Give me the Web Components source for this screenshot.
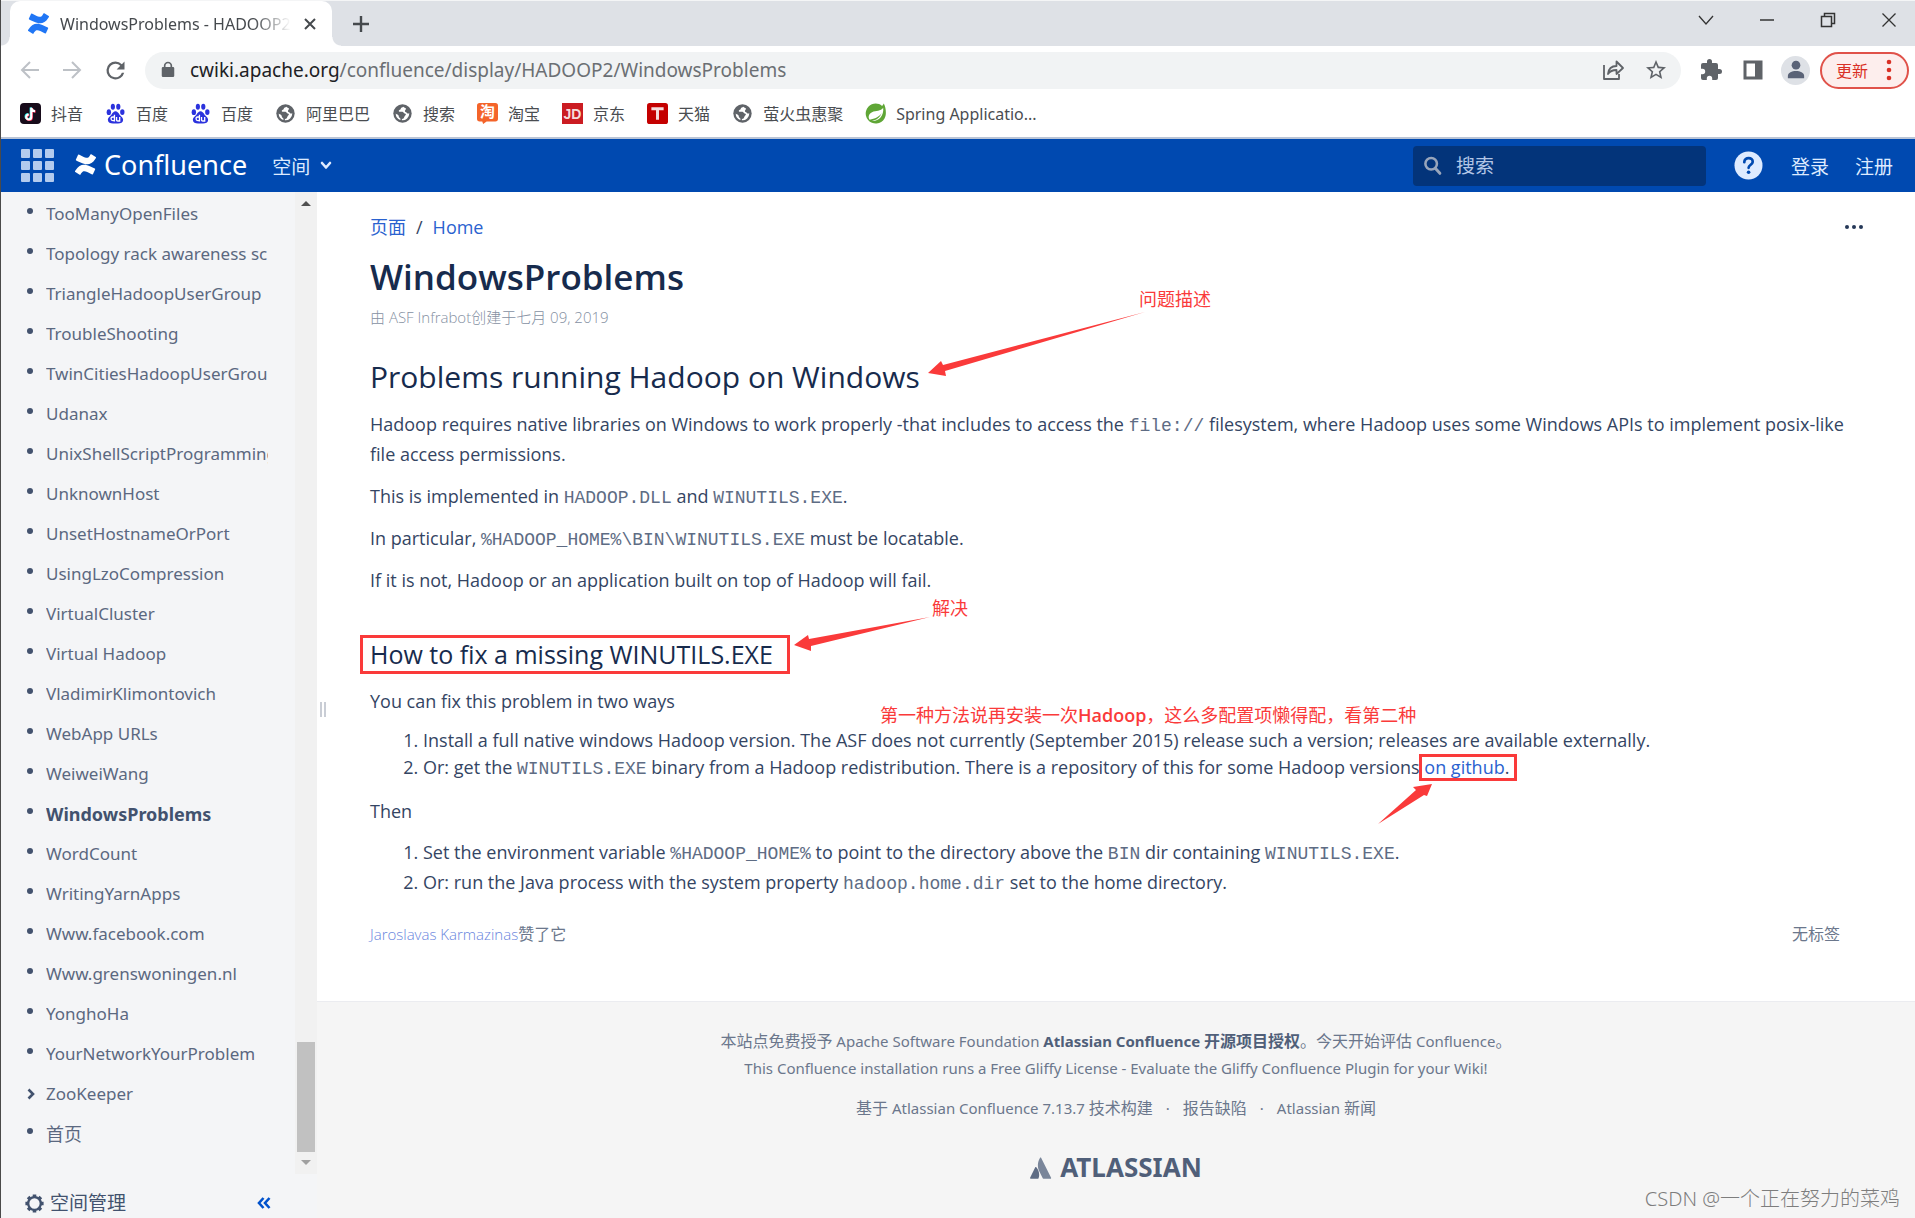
<!DOCTYPE html>
<html lang="zh-CN">
<head>
<meta charset="utf-8">
<title>WindowsProblems - HADOOP2</title>
<style>
  html, body { margin: 0; height: 100%; }
  body {
    font-family: "Noto Sans", "Noto Sans CJK SC", sans-serif;
    font-size: 17px;
    color: #172b4d;
    background: #fff;
    overflow: hidden;
  }
</style>
</head>
<body>
<wiki-window></wiki-window>

<template id="t-window">
  <style>
    :host { display: flex; flex-direction: column; height: 100vh; box-sizing: border-box; border-left: 1px solid #4a4a4a; position: relative; }
    .body { flex: 1; min-height: 0; display: flex; }
    main { flex: 1; min-width: 0; display: flex; flex-direction: column; position: relative; }
    .handle { position: absolute; left: 3px; top: 510px; width: 2px; height: 15px; border: solid #c9cdd5; border-width: 0 2px; }
    .watermark { position: absolute; right: 15px; bottom: 6px; font-size: 20px; font-weight: 300; line-height: 26px; color: #7d7d7d; }
  </style>
  <tab-strip></tab-strip>
  <nav-toolbar></nav-toolbar>
  <bookmark-bar></bookmark-bar>
  <wiki-header></wiki-header>
  <div class="body">
    <page-tree></page-tree>
    <main>
      <wiki-article></wiki-article>
      <wiki-footer></wiki-footer>
      <div class="handle"></div>
    </main>
  </div>
  <div class="watermark">CSDN @一个正在努力的菜鸡</div>
</template>

<template id="t-tabs">
  <style>
    :host { display: flex; height: 45px; background: #dee1e6; border-top: 1px solid #f4f5f6; padding-left: 9px; color: #45494d; }
    .tab { width: 322px; box-sizing: border-box; background: #fff; border-radius: 10px 10px 0 0; display: flex; align-items: center; padding: 0 14px 0 18px; gap: 11px; position: relative; }
    .tab::before, .tab::after { content: ""; position: absolute; bottom: 0; width: 9px; height: 9px; }
    .tab::before { left: -9px; background: radial-gradient(circle at 0 0, transparent 8px, #fff 9px); }
    .tab::after { right: -9px; background: radial-gradient(circle at 100% 0, transparent 8px, #fff 9px); }
    .title { flex: 1; overflow: hidden; white-space: nowrap; font-size: 16px; -webkit-mask-image: linear-gradient(90deg, #000 84%, transparent); mask-image: linear-gradient(90deg, #000 84%, transparent); }
    button { border: 0; background: none; padding: 0; display: flex; color: inherit; }
    .new { margin-left: 20px; align-items: center; }
    .win { margin-left: auto; display: flex; gap: 43px; padding: 10px 17px 0 0; align-items: flex-start; color: #333; }
    svg { display: block; }
  </style>
  <div class="tab">
    <ui-icon name="confluence" size="21" style="color:#2076f5"></ui-icon>
    <span class="title">WindowsProblems - HADOOP2</span>
    <button aria-label="关闭标签页"><svg width="16" height="16" viewBox="0 0 16 16" stroke="currentColor" stroke-width="2"><path d="M3 3l10 10M13 3L3 13"/></svg></button>
  </div>
  <button class="new" aria-label="新标签页"><svg width="18" height="18" viewBox="0 0 18 18" stroke="currentColor" stroke-width="2.4"><path d="M9 1v16M1 9h16"/></svg></button>
  <div class="win">
    <button aria-label="搜索标签页"><svg width="18" height="18" viewBox="0 0 18 18" fill="none" stroke="currentColor" stroke-width="1.3"><path d="M2 5l7 8 7-8"/></svg></button>
    <button aria-label="最小化"><svg width="18" height="18" viewBox="0 0 18 18" stroke="currentColor" stroke-width="1.5"><path d="M2 9h14"/></svg></button>
    <button aria-label="还原"><svg width="18" height="18" viewBox="0 0 18 18" fill="none" stroke="currentColor" stroke-width="1.5"><path d="M2.5 5.5h10v10h-10zM5.5 5V2.500h10v10H13"/></svg></button>
    <button aria-label="关闭"><svg width="18" height="18" viewBox="0 0 18 18" stroke="currentColor" stroke-width="1.3"><path d="M2.500 2.500l13 13M15.500 2.500l-13 13"/></svg></button>
  </div>
</template>

<template id="t-toolbar">
  <style>
    :host { display: flex; height: 48px; align-items: center; padding: 0 6px 0 17px; box-sizing: border-box; color: #5f6368; }
    button { border: 0; background: none; padding: 0; display: flex; color: inherit; font: inherit; align-items: center; }
    .nav { display: flex; gap: 18px; padding-right: 16px; }
    .off { color: #bdc1c6; }
    .omni { flex: 1; height: 37px; border-radius: 19px; background: #f1f3f4; display: flex; align-items: center; padding: 0 13px 0 13px; gap: 12px; }
    .url { flex: 1; font-size: 19px; line-height: 37px; color: #6b6f73; white-space: nowrap; }
    .url b { font-weight: 400; color: #202124; }
    .acts { display: flex; gap: 19px; }
    .ext { display: flex; gap: 18px; align-items: center; padding: 0 10px 0 18px; }
    .avatar { width: 29px; height: 29px; border-radius: 50%; background: #dee1e6; color: #5a6377; justify-content: center; overflow: hidden; margin-left: -2px; }
    .update { box-sizing: border-box; width: 89px; height: 37px; border: 2px solid #e0524a; border-radius: 19px; background: #fdeeed; color: #d93025; font-size: 16px; padding: 0 12px 0 14px; justify-content: space-between; }
  </style>
  <div class="nav">
    <button class="off" aria-label="后退"><ui-icon name="back" size="24"></ui-icon></button>
    <button class="off" aria-label="前进"><ui-icon name="forward" size="24"></ui-icon></button>
    <button aria-label="刷新"><ui-icon name="reload" size="27"></ui-icon></button>
  </div>
  <div class="omni">
    <ui-icon name="lock" size="20"></ui-icon>
    <span class="url"><b>cwiki.apache.org</b>/confluence/display/HADOOP2/WindowsProblems</span>
    <div class="acts">
      <button aria-label="分享"><ui-icon name="share" size="24"></ui-icon></button>
      <button aria-label="收藏"><ui-icon name="star" size="24"></ui-icon></button>
    </div>
  </div>
  <div class="ext">
    <button aria-label="扩展程序"><ui-icon name="puzzle" size="24"></ui-icon></button>
    <button aria-label="侧边栏"><ui-icon name="panel" size="24"></ui-icon></button>
    <button class="avatar" aria-label="个人资料"><ui-icon name="person" size="26"></ui-icon></button>
  </div>
  <button class="update">更新<ui-icon name="dots" size="12" tall="24"></ui-icon></button>
</template>

<template id="t-bookmarks">
  <style>
    :host { display: flex; height: 45px; box-sizing: border-box; border-bottom: 2px solid #b9c4d6; align-items: center; gap: 22px; padding: 0 0 4px 19px; }
  </style>
  <bookmark-link icon="douyin">抖音</bookmark-link>
  <bookmark-link icon="baidu">百度</bookmark-link>
  <bookmark-link icon="baidu">百度</bookmark-link>
  <bookmark-link icon="globe">阿里巴巴</bookmark-link>
  <bookmark-link icon="globe">搜索</bookmark-link>
  <bookmark-link icon="taobao">淘宝</bookmark-link>
  <bookmark-link icon="jd">京东</bookmark-link>
  <bookmark-link icon="tmall">天猫</bookmark-link>
  <bookmark-link icon="globe">萤火虫惠聚</bookmark-link>
  <bookmark-link icon="spring">Spring Applicatio...</bookmark-link>
</template>

<template id="t-header">
  <style>
    :host { display: flex; height: 53px; background: #0049b0; align-items: center; color: #deebff; font-size: 19px; padding: 0 22px 0 20px; }
    button { border: 0; background: none; padding: 0; display: flex; color: inherit; font: inherit; align-items: center; }
    a { color: inherit; text-decoration: none; }
    .apps { display: grid; grid-template-columns: repeat(3, 9px); gap: 3px; }
    .apps i { height: 9px; background: #b3cbee; border-radius: 1px; }
    .logo { display: flex; align-items: center; gap: 8px; margin-left: 21px; padding-bottom: 2px; color: #fff; font-size: 27px; line-height: 40px; }
    .spaces { margin-left: 25px; gap: 8px; }
    .search { margin-left: auto; width: 293px; height: 40px; box-sizing: border-box; border-radius: 4px; background: #03347a; display: flex; align-items: center; padding-left: 9px; gap: 12px; color: #98a5bb; }
    input { flex: 1; min-width: 0; border: 0; background: none; font: inherit; color: #b3c6e6; padding: 0; outline: 0; }
    input::placeholder { color: #b3c6e6; opacity: 1; }
    .help { margin: 0 28px; }
    .join { margin-left: 26px; }
  </style>
  <button class="apps" aria-label="应用"><i></i><i></i><i></i><i></i><i></i><i></i><i></i><i></i><i></i></button>
  <a class="logo" href="#"><ui-icon name="confluence" size="21"></ui-icon>Confluence</a>
  <button class="spaces">空间<svg width="16" height="12" viewBox="0 0 16 12" fill="none" stroke="currentColor" stroke-width="2.600" stroke-linecap="round" stroke-linejoin="round"><path d="M4 3l4 4.500L12 3"/></svg></button>
  <label class="search"><ui-icon name="search" size="22"></ui-icon><input type="text" placeholder="搜索" aria-label="搜索"></label>
  <a class="help" href="#" aria-label="帮助"><svg width="29" height="29" viewBox="0 0 29 29" style="display:block"><circle cx="14.500" cy="14.500" r="14" fill="#deebff"/><path d="M10.300 11.200c0-5.600 8.800-5.400 8.400-.2-.2 2.700-4 2.900-4.100 5.800" fill="none" stroke="#0049b0" stroke-width="2.700" stroke-linecap="round"/><circle cx="14.600" cy="21.300" r="1.800" fill="#0049b0"/></svg></a>
  <a href="#">登录</a><a class="join" href="#">注册</a>
</template>

<template id="t-tree">
  <style>
    :host { display: flex; flex-direction: column; width: 316px; background: #f4f5f7; }
    .scroll { flex: 1; min-height: 0; display: flex; overflow: hidden; }
    ul { flex: 1; min-width: 0; list-style: none; margin: 0; padding: 2px 0 0; overflow: hidden; }
    .track { width: 22px; background: #f1f1f1; display: flex; flex-direction: column; align-items: center; padding: 9px 0 9px; box-sizing: border-box; }
    .track i { border: 5px solid transparent; border-top: 0; border-bottom: 5px solid #505050; }
    .track i.down { border-bottom: 0; border-top: 5px solid #a0a0a0; }
    .thumb { width: 18px; height: 110px; background: #c1c1c1; margin: auto 0 8px; }
    .tools { height: 44px; display: flex; align-items: center; padding: 14px 0 0 24px; box-sizing: border-box; color: #42526e; font-size: 19px; line-height: 26px; justify-content: space-between; }
    .tools a { color: inherit; text-decoration: none; display: flex; align-items: center; gap: 6px; }
    button { border: 0; background: none; padding: 0; color: #0052cc; margin-right: 46px; display: flex; }
  </style>
  <div class="scroll">
    <ul></ul>
    <div class="track"><i></i><div class="thumb"></div><i class="down"></i></div>
  </div>
  <div class="tools"><a href="#"><ui-icon name="gear" size="19"></ui-icon>空间管理</a>
    <button aria-label="折叠侧边栏"><svg width="14" height="12" viewBox="0 0 14 12" fill="none" stroke="currentColor" stroke-width="2.600"><path d="M6.500 1L2 6l4.500 5M12.500 1L8 6l4.500 5"/></svg></button></div>
</template>

<template id="t-tree-item">
  <style>
    :host { display: flex; height: 40px; align-items: center; padding: 0 27px 0 26px; }
    .mark { flex: none; width: 19px; display: flex; }
    .dot { width: 6px; height: 6px; border-radius: 50%; background: #42526e; margin-bottom: 6px; }
    .mark svg { display: block; }
    a { flex: 1; overflow: hidden; white-space: nowrap; color: #5b6880; text-decoration: none; font-size: 17px; line-height: 40px; }
    :host([current]) a { font-weight: 700; font-size: 18px; color: #42526e; }
    :host([hanzi]) a { font-size: 18px; }
  </style>
  <span class="mark"></span><a href="#"><slot></slot></a>
</template>

<template id="t-article">
  <style>
    :host { display: block; position: relative; background: #fff; padding: 20px 60px 55px 53px; font-family: "Open Sans", "Noto Sans CJK SC", sans-serif; font-size: 18px; line-height: 30px; color: #344563; }
    a { color: #2a62cf; text-decoration: none; }
    .top { display: flex; justify-content: space-between; align-items: center; margin-right: -8px; height: 30px; }
    .crumbs { display: flex; gap: 10px; }
    .more { border: 0; background: none; padding: 0; display: flex; gap: 3px; }
    .more i { width: 4px; height: 4px; border-radius: 50%; background: #253858; }
    h1, h2, h3, p, ol { margin: 0; }
    h1 { margin-top: 13px; font-size: 35px; line-height: 44px; font-weight: 600; color: #172b4d; }
    .meta { margin-top: 6px; font-size: 15px; line-height: 24px; color: #8590a2; font-weight: 300; }
    h2 { margin-top: 28px; font-size: 30px; line-height: 40px; font-weight: 400; color: #172b4d; }
    h3 { margin-top: 42px; font-size: 25px; line-height: 34px; font-weight: 400; color: #172b4d; }
    p { margin-top: 12px; }
    h3 + p { margin-top: 15px; }
    code { font: 18px/1 "Liberation Mono", monospace; color: #5e6c84; }
    ol { margin-top: 11px; padding-left: 53px; }
    ol.tight { line-height: 27px; }
    ol + p { margin-top: 15px; }
    .likes { margin-top: 25px; display: flex; justify-content: space-between; font-size: 16px; line-height: 24px; color: #6b778c; margin-right: 15px; }
    .likes a { font-size: 15px; color: #6784dd; font-weight: 300; }
  </style>
  <div class="top">
    <nav class="crumbs"><a href="#">页面</a><span>/</span><a href="#">Home</a></nav>
    <button class="more" aria-label="更多"><i></i><i></i><i></i></button>
  </div>
  <h1>WindowsProblems</h1>
  <div class="meta">由 ASF Infrabot创建于七月 09, 2019</div>
  <h2>Problems running Hadoop on Windows</h2>
  <p>Hadoop requires native libraries on Windows to work properly -that includes to access the <code>file://</code> filesystem, where Hadoop uses some Windows APIs to implement posix-like file access permissions.</p>
  <p>This is implemented in <code>HADOOP.DLL</code> and <code>WINUTILS.EXE</code>.</p>
  <p>In particular, <code>%HADOOP_HOME%\BIN\WINUTILS.EXE</code> must be locatable.</p>
  <p>If it is not, Hadoop or an application built on top of Hadoop will fail.</p>
  <h3>How to fix a missing WINUTILS.EXE</h3>
  <p>You can fix this problem in two ways</p>
  <ol class="tight">
    <li>Install a full native windows Hadoop version. The ASF does not currently (September 2015) release such a version; releases are available externally.</li>
    <li>Or: get the <code>WINUTILS.EXE</code> binary from a Hadoop redistribution. There is a repository of this for some Hadoop versions <a href="#">on github</a>.</li>
  </ol>
  <p>Then</p>
  <ol>
    <li>Set the environment variable <code>%HADOOP_HOME%</code> to point to the directory above the <code>BIN</code> dir containing <code>WINUTILS.EXE</code>.</li>
    <li>Or: run the Java process with the system property <code>hadoop.home.dir</code> set to the home directory.</li>
  </ol>
  <div class="likes"><span><a href="#">Jaroslavas Karmazinas</a>赞了它</span><span>无标签</span></div>
  <review-notes></review-notes>
</template>

<template id="t-notes">
  <style>
    :host { position: absolute; inset: 0; pointer-events: none; color: #fa3a3a; font-size: 18px; line-height: 26px; }
    svg { position: absolute; left: 0; top: 0; width: 100%; height: 100%; }
    span, i { position: absolute; white-space: nowrap; }
    i { box-sizing: border-box; border: 3px solid #fa3a3a; }
    b { font-weight: 600; }
  </style>
  <svg fill="#fa3a3a">
    <path d="M611 181l13-12 2 4L828 120 628 179l1 5z"/>
    <path d="M477 453l14-10 1 4L613 425 494 454l0 5z"/>
    <path d="M1115 592l-5 12-3-1L1061 632l38-34-3-3z"/>
  </svg>
  <i style="left:43px;top:443px;width:430px;height:39px"></i>
  <i style="left:1102px;top:562px;width:98px;height:27px"></i>
  <span style="left:822px;top:94px">问题描述</span>
  <span style="left:615px;top:403px">解决</span>
  <span style="left:563px;top:510px">第一种方法说再安装一次<b>Hadoop</b>，这么多配置项懒得配，看第二种</span>
</template>

<template id="t-footer">
  <style>
    :host { flex: 1; display: flex; flex-direction: column; align-items: center; background: #f5f5f5; border-top: 1px solid #ebecf0; padding-top: 26px; font-size: 15px; line-height: 27px; color: #6b778c; }
    a { color: inherit; text-decoration: none; }
    b { color: #505f79; }
    .zh { font-size: 16px; }
    .links { display: flex; gap: 13px; margin-top: 13px; }
    .brand { display: flex; align-items: center; gap: 8px; margin-top: 32px; font-size: 26px; font-weight: 700; color: #505f79; line-height: 27px; }
  </style>
  <div><span class="zh">本站点免费授予</span> Apache Software Foundation <b>Atlassian Confluence <span class="zh">开源项目授权</span></b><span class="zh">。今天开始评估</span> Confluence<span class="zh">。</span></div>
  <div>This Confluence installation runs a Free Gliffy License - Evaluate the Gliffy Confluence Plugin for your Wiki!</div>
  <div class="links"><span><span class="zh">基于</span> <a href="#">Atlassian Confluence</a> 7.13.7 <span class="zh">技术构建</span></span><span>·</span><a class="zh" href="#">报告缺陷</a><span>·</span><a href="#">Atlassian <span class="zh">新闻</span></a></div>
  <a class="brand" href="#"><ui-icon name="atlassian" size="22"></ui-icon>ATLASSIAN</a>
</template>

<script>
  const CONFLUENCE = '<path fill="currentColor" d="M.87 18.257c-.248.382-.53.875-.763 1.245a.764.764 0 0 0 .255 1.04l4.965 3.054a.764.764 0 0 0 1.058-.26c.199-.332.454-.763.733-1.221 1.967-3.247 3.945-2.853 7.508-1.146l4.957 2.337a.764.764 0 0 0 1.028-.382l2.364-5.346a.764.764 0 0 0-.382-1 599.851 599.851 0 0 1-4.965-2.361C10.911 10.97 5.224 11.185.87 18.257zM23.131 5.743c.249-.405.531-.875.764-1.25a.764.764 0 0 0-.256-1.034L18.675.404a.764.764 0 0 0-1.058.26c-.195.335-.451.763-.734 1.225-1.966 3.246-3.945 2.85-7.508 1.146L4.437.694a.764.764 0 0 0-1.027.382L1.046 6.422a.764.764 0 0 0 .382 1c1.039.49 3.105 1.467 4.965 2.361 6.698 3.246 12.392 3.029 16.738-4.04z"/>';
  const CJK = 'font-family="Noto Sans CJK SC, sans-serif"';
  const ICONS = {
    confluence: CONFLUENCE,
    back: '<path d="M21 12H5M12 4l-8 8 8 8" fill="none" stroke="currentColor" stroke-width="2"/>',
    forward: '<path d="M3 12h16M12 4l8 8-8 8" fill="none" stroke="currentColor" stroke-width="2"/>',
    reload: '<path fill="currentColor" d="M17.650 6.350A7.950 7.950 0 0 0 12 4a8 8 0 1 0 7.730 10h-2.080A6 6 0 1 1 12 6c1.660 0 3.140.690 4.220 1.780L13 11h7V4z"/>',
    lock: '<path fill="currentColor" d="M18 8.500h-1V7A5 5 0 0 0 7 7v1.500H6a1.500 1.500 0 0 0-1.500 1.500v9A1.500 1.500 0 0 0 6 20.500h12a1.500 1.500 0 0 0 1.500-1.500v-9A1.500 1.500 0 0 0 18 8.500zM9 7a3 3 0 0 1 6 0v1.500H9z"/>',
    share: '<path d="M3 7v14h15v-5M7 16c.500-5 3.500-8 8.500-8V3.500L22 10l-6.500 6v-4c-4 0-6.500 1-8.500 4z" fill="none" stroke="currentColor" stroke-width="1.800" stroke-linejoin="round"/>',
    star: '<path fill="currentColor" d="M22 9.240l-7.190-.620L12 2 9.190 8.630 2 9.240l5.460 4.730L5.820 21 12 17.270 18.180 21l-1.630-7.030zM12 15.400l-3.760 2.270 1-4.280-3.320-2.880 4.380-.380L12 6.100l1.710 4.040 4.380.380-3.320 2.880 1 4.280z"/>',
    puzzle: '<path fill="currentColor" d="M20.500 11H19V7a2 2 0 0 0-2-2h-4V3.500a2.500 2.500 0 0 0-5 0V5H4a2 2 0 0 0-2 2v3.800h1.500a2.700 2.700 0 0 1 0 5.400H2V20a2 2 0 0 0 2 2h3.800v-1.500a2.700 2.700 0 0 1 5.400 0V22H17a2 2 0 0 0 2-2v-4h1.500a2.500 2.500 0 0 0 0-5z"/>',
    panel: '<path fill="currentColor" fill-rule="evenodd" d="M2.500 2.500h19v19h-19zM5.500 5.500v13h8.500v-13z"/>',
    person: '<circle cx="12" cy="7.500" r="4" fill="currentColor"/><path fill="currentColor" d="M4.500 19.500v-2c0-6 15-6 15 0v2z"/>',
    gear: '<circle cx="12" cy="12" r="8" fill="none" stroke="currentColor" stroke-width="3"/><path d="M12 4V.500M12 20v3.500M4 12H.500M20 12h3.500M6.300 6.300L3.900 3.900M17.700 6.300l2.400-2.400M6.300 17.700l-2.400 2.400M17.700 17.700l2.400 2.400" stroke="currentColor" stroke-width="4.500"/>',
    search: '<circle cx="10" cy="9.500" r="6.300" fill="none" stroke="currentColor" stroke-width="2.800"/><path d="M14.500 14.500l5 5.500" stroke="currentColor" stroke-width="3.200" stroke-linecap="round"/>',
    douyin: '<rect width="24" height="24" rx="4.500" fill="#170b1a"/><g fill="none" stroke-width="2.400"><path d="M12.200 5v10.500a2.900 2.900 0 1 1-2.900-2.900M12.200 5c.300 2.500 1.800 3.700 4.300 3.900" stroke="#25f4ee"/><path d="M13.600 6v10.500a2.900 2.900 0 1 1-2.900-2.900M13.600 6c.300 2.500 1.800 3.700 4.300 3.900" stroke="#fe2c55"/><path d="M12.900 5.500V16a2.900 2.900 0 1 1-2.900-2.900M12.900 5.500c.300 2.500 1.800 3.700 4.300 3.900" stroke="#fff"/></g>',
    baidu: '<g fill="#2b32dd"><ellipse cx="4.400" cy="10.500" rx="2.500" ry="3.300"/><ellipse cx="9" cy="4.300" rx="2.400" ry="3.500"/><ellipse cx="15.200" cy="4.300" rx="2.400" ry="3.500"/><ellipse cx="19.800" cy="10.300" rx="2.500" ry="3.300"/><path d="M12 9.500c2 0 3 1.500 4.500 3.500s4.500 3.500 4.200 6.500c-.300 4-4.200 4.300-8.700 3.800-4.500.500-8.400.200-8.700-3.800-.300-3 2.700-4.500 4.200-6.500S10 9.500 12 9.500z"/></g><path d="M10.800 13.500V21M10.800 20.200H9a2.100 2.100 0 0 1 0-4.200h1.800M13.200 16v3.300c0 1 .5 1.300 1.300 1.300h2.300V16" fill="none" stroke="#fff" stroke-width="1.500"/>',
    globe: '<circle cx="12" cy="12" r="10.500" fill="#5f6368"/><path fill="#fff" d="M13 4.200c-1 1-2.800.8-3 2.300-.1 1.300-2 1-2.300 2.300-.2 1.200 1 1.200 2.300 1.200 1.500 0 2.800-.3 3.300 1 .5 1.200 2.200.4 2.500 1.600.3 1.300-.9 1.800-1.500 2.700-.7 1-.6 2.500-2 2.800-1.300.2-1 1-1 1.600a7.900 7.900 0 0 0 8.500-7.900c-1.300.4-2.300.2-3-.8-.6-1-2.100-.6-2-2 .1-1 1.300-1.200 1.200-2.300-.1-1-1.600-1.300-3-2.500zM4.200 12a8 8 0 0 0 5.300 7.400c.5-1.400 0-2-.8-2.600C7.300 16 8.300 14.500 7 13.600c-.9-.6-2-.6-2.800-1.600z"/>',
    taobao: '<path fill="#f4642a" d="M3 0h18a3 3 0 0 1 3 3v15a3 3 0 0 1-3 3H11l-4 3-1-3H3a3 3 0 0 1-3-3V3a3 3 0 0 1 3-3z"/><text x="12" y="16.500" text-anchor="middle" font-size="17" font-weight="700" fill="#fff" ' + CJK + '>淘</text>',
    jd: '<rect width="24" height="24" fill="#cb1c22"/><text x="12" y="18" text-anchor="middle" font-size="16" font-weight="700" fill="#f5dcdc" font-family="Liberation Sans, sans-serif">JD</text>',
    tmall: '<rect width="24" height="24" rx="3" fill="#c40000"/><path d="M5 6.500h14M12 6.500V19" stroke="#f5dcdc" stroke-width="3.400"/>',
    spring: '<path d="M21.500.500c2 4 2.500 8 2.300 12A11.500 11.500 0 1 1 3.800 4.300C8.500-.500 15-.500 19.500 3.300c.9-.8 1.500-1.800 2-2.800z" fill="#5fa636"/><path d="M20.800 5.500c-3 4.500-8 2.800-12.800 5C4 12.300 3.300 16.300 5.300 19c6-1 11-3 13.700-7.500-2 5.500-6.500 8.300-11 9 7 .7 13.800-5 12.800-15z" fill="#fff"/>',
    atlassian: '<path fill="#5e6c84" d="M6.900 11.300c-.4-.4-1-.4-1.300.2L.1 22.700c-.2.500.1 1.100.7 1.100h7.700c.3 0 .500-.1.700-.400 1.700-3.500.7-8.700-2.300-12.100z"/><path fill="#7a869a" d="M11 .900c-3.100 5-2.900 10.500-.9 14.700l3.800 7.700c.1.300.4.500.7.500h7.700c.600 0 .9-.600.7-1.100L12.100.900c-.200-.500-.8-.500-1.100 0z"/>'
  };

  /* Base class: clones the element's template into an open shadow root. */
  class Part extends HTMLElement {
    constructor() {
      super();
      this.attachShadow({ mode: 'open' });
      const id = this.constructor.template;
      if (id) this.shadowRoot.append(document.getElementById(id).content.cloneNode(true));
    }
  }

  class UiIcon extends Part {
    connectedCallback() {
      const w = this.getAttribute('size'), name = this.getAttribute('name');
      const h = this.getAttribute('tall') || w;
      const body = name === 'dots'
        ? '<g fill="currentColor"><circle cx="6" cy="4" r="2.300"/><circle cx="6" cy="12" r="2.300"/><circle cx="6" cy="20" r="2.300"/></g>'
        : ICONS[name];
      const box = name === 'dots' ? '0 0 12 24' : '0 0 24 24';
      this.shadowRoot.innerHTML = `<style>:host{display:block;flex:none}svg{display:block}</style>
        <svg width="${w}" height="${h}" viewBox="${box}" aria-hidden="true">${body}</svg>`;
    }
  }

  class BookmarkLink extends Part {
    connectedCallback() {
      this.shadowRoot.innerHTML = `<style>:host{display:block}
        a{display:flex;align-items:center;gap:10px;color:#4a4d51;text-decoration:none;font-size:16px;line-height:24px;white-space:nowrap}</style>
        <a href="#"><ui-icon name="${this.getAttribute('icon')}" size="21"></ui-icon><slot></slot></a>`;
    }
  }

  class TreeItem extends Part {
    static template = 't-tree-item';
    connectedCallback() {
      this.shadowRoot.querySelector('.mark').innerHTML = this.hasAttribute('branch')
        ? '<svg width="9" height="12" viewBox="0 0 9 12" fill="none" stroke="#42526e" stroke-width="2.600"><path d="M1.500 1.500L6 6l-4.500 4.500"/></svg>'
        : '<i class="dot"></i>';
    }
  }

  class PageTree extends Part {
    static template = 't-tree';
    connectedCallback() {
      const pages = ['TooManyOpenFiles', 'Topology rack awareness scripts', 'TriangleHadoopUserGroup', 'TroubleShooting',
        'TwinCitiesHadoopUserGroup', 'Udanax', 'UnixShellScriptProgramming', 'UnknownHost', 'UnsetHostnameOrPort',
        'UsingLzoCompression', 'VirtualCluster', 'Virtual Hadoop', 'VladimirKlimontovich', 'WebApp URLs', 'WeiweiWang',
        'WindowsProblems', 'WordCount', 'WritingYarnApps', 'Www.facebook.com', 'Www.grenswoningen.nl', 'YonghoHa',
        'YourNetworkYourProblem', 'ZooKeeper', '首页'];
      const flags = { WindowsProblems: ' current', ZooKeeper: ' branch', 首页: ' hanzi' };
      this.shadowRoot.querySelector('ul').innerHTML = pages.map(p =>
        `<li><tree-item${flags[p] || ''}>${p}</tree-item></li>`).join('');
    }
  }

  const simple = (tag, id) => customElements.define(tag, class extends Part { static template = id; });

  customElements.define('ui-icon', UiIcon);
  customElements.define('bookmark-link', BookmarkLink);
  customElements.define('tree-item', TreeItem);
  customElements.define('page-tree', PageTree);
  simple('tab-strip', 't-tabs');
  simple('nav-toolbar', 't-toolbar');
  simple('bookmark-bar', 't-bookmarks');
  simple('wiki-header', 't-header');
  simple('review-notes', 't-notes');
  simple('wiki-article', 't-article');
  simple('wiki-footer', 't-footer');
  simple('wiki-window', 't-window');
</script>
</body>
</html>
